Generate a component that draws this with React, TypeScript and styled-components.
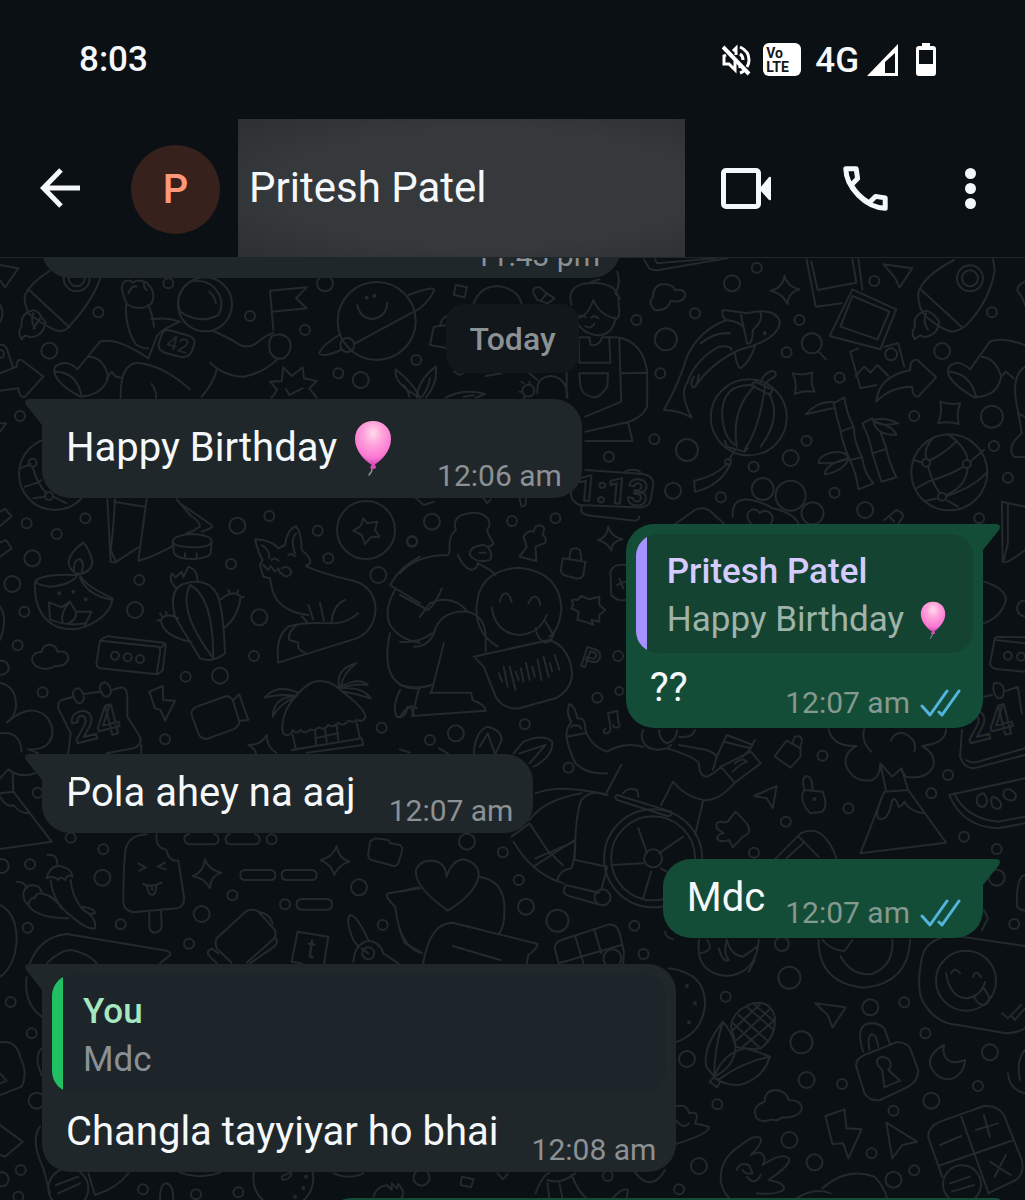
import React from "react";
import styled, { createGlobalStyle } from "styled-components";

const color = {
  page: "#0b1014",
  line: "#20272b",
  text: "#f5f8fa",
  incoming: "#20272a",
  outgoing: "#144d37",
  muted: "#8b9194",
};

const GlobalStyle = createGlobalStyle`
  * { box-sizing: border-box; }
  body { margin: 0; background: ${color.page}; }
`;

const Screen = styled.main`
  display: flex;
  flex-direction: column;
  height: 100vh;
  overflow: hidden;
  background: ${color.page};
  color: ${color.text};
  font-family: Roboto, "Noto Sans", sans-serif;
`;

const StatusBar = styled.div`
  display: flex;
  align-items: center;
  justify-content: space-between;
  flex: none;
  height: 119px;
  padding: 0 89px 0 79px;
  font-size: 35px;
  font-weight: 500;
  line-height: 40px;
`;

const StatusIcons = styled.div`
  display: flex;
  align-items: center;
  gap: 8px;
`;

const Network = styled.span`
  padding: 2px 0 0 6px;
`;

const VolteBadge = styled.span`
  display: flex;
  flex-direction: column;
  justify-content: center;
  width: 38px;
  height: 33px;
  margin-left: 4px;
  padding-left: 3px;
  border-radius: 6px;
  background: #ffffff;
  color: #15191c;
  font-size: 14px;
  font-weight: 700;
  line-height: 14px;
`;

const Battery = styled.span`
  display: flex;
  padding-left: 10px;
`;

const Header = styled.header`
  display: flex;
  align-items: center;
  flex: none;
  height: 139px;
  padding: 0 49px 0 40px;
  border-bottom: 1px solid ${color.line};
`;

const IconButton = styled.button`
  display: flex;
  align-items: center;
  justify-content: center;
  padding: 0;
  border: 0;
  background: none;
  color: ${color.text};
  cursor: pointer;
`;

const MenuButton = styled(IconButton)`
  padding-left: 5px;
`;

const Avatar = styled.span`
  display: flex;
  align-items: center;
  justify-content: center;
  width: 89px;
  height: 89px;
  margin: 2px 18px 0 51px;
  border-radius: 50%;
  background: #36211d;
  color: #ff9778;
  font-size: 40px;
  font-weight: 500;
`;

const ContactName = styled.h1`
  display: flex;
  flex: 1;
  align-items: center;
  align-self: stretch;
  margin: 0 36px 0 0;
  padding: 0 0 1px 11px;
  background: radial-gradient(ellipse at 55% 50%, #35393b 60%, #2c3033 100%);
  font-size: 42px;
  font-weight: 400;
`;

const Actions = styled.div`
  display: flex;
  align-items: center;
  gap: 72px;
`;

const Chat = styled.section`
  position: relative;
  flex: 1;
  min-height: 0;
  overflow: hidden;
`;

const Wallpaper = styled.svg`
  position: absolute;
  inset: 0;
  width: 100%;
  height: 100%;
  fill: none;
  stroke: #23292d;
  stroke-width: 2;
  stroke-linecap: round;
  stroke-linejoin: round;
  font-family: Roboto, sans-serif;
  font-weight: 700;
`;

const Messages = styled.ol`
  position: relative;
  display: flex;
  flex-direction: column;
  align-items: flex-start;
  gap: 26px;
  margin: 0;
  padding: 0 42px;
  list-style: none;
`;

const DateChip = styled.li`
  align-self: center;
  padding: 15px 23px 14px;
  border-radius: 18px;
  background: #11171b;
  color: ${color.muted};
  font-size: 32px;
  font-weight: 500;
  line-height: 40px;
`;

const Bubble = styled.li<{ $own?: boolean; $tail?: boolean }>`
  position: relative;
  display: flex;
  flex-direction: column;
  align-self: ${(p) => (p.$own ? "flex-end" : "flex-start")};
  border-radius: 28px;
  background: ${(p) => (p.$own ? color.outgoing : color.incoming)};

  &::before {
    content: "";
    display: ${(p) => (p.$tail === false ? "none" : "block")};
    position: absolute;
    top: 0;
    ${(p) => (p.$own ? "right: -17px; transform: scaleX(-1);" : "left: -17px;")}
    width: 46px;
    height: 28px;
    background: inherit;
    clip-path: path("M4 0 H46 V28 H17 V26 L1 6 Q-2 0 4 0 Z");
  }
`;

const EarlierBubble = styled(Bubble)`
  align-items: flex-end;
  justify-content: flex-end;
  width: 578px;
  height: 60px;
  margin-top: -40px;
  padding: 0 20px 6px;
`;

const NextBubble = styled(Bubble)`
  width: 70%;
  height: 79px;
`;

const Body = styled.div<{ $own?: boolean; $top?: number }>`
  display: flex;
  align-items: flex-end;
  justify-content: space-between;
  gap: ${(p) => (p.$own ? 20 : 33)}px;
  padding: ${(p) => p.$top ?? 13}px ${(p) => (p.$own ? 22 : 20)}px ${(p) => (p.$own ? 9 : 6)}px 24px;
`;

const Words = styled.p<{ $own?: boolean; $tall?: boolean }>`
  display: flex;
  align-items: center;
  gap: 17px;
  margin: 0;
  padding-right: ${(p) => (p.$tall ? 12 : 0)}px;
  padding-bottom: ${(p) => (p.$own ? 5 : 8)}px;
  font-size: 40px;
  line-height: ${(p) => (p.$tall ? 72 : 52)}px;
  white-space: nowrap;
`;

const Stamp = styled.span<{ $own?: boolean }>`
  display: flex;
  align-items: center;
  gap: 10px;
  color: ${(p) => (p.$own ? "#84998f" : color.muted)};
  font-size: 30px;
  line-height: 32px;
  white-space: nowrap;
`;

const Quote = styled.blockquote<{ $own?: boolean }>`
  display: flex;
  flex-direction: column;
  position: relative;
  margin: 10px 10px 0;
  padding: 14px 27px 9px 31px;
  overflow: hidden;
  border-radius: 22px;
  background: ${(p) => (p.$own ? "#154332" : "#1d242a")};
  font-size: 35px;
  line-height: 48px;

  &::before {
    content: "";
    position: absolute;
    inset: 0 auto 0 0;
    width: 11px;
    background: ${(p) => (p.$own ? "#a791ff" : "#21c063")};
  }
`;

const QuoteAuthor = styled.cite<{ $own?: boolean }>`
  color: ${(p) => (p.$own ? "#d6cbff" : "#a5e8c0")};
  font-style: normal;
  font-weight: 500;
`;

const QuoteText = styled.span<{ $own?: boolean }>`
  display: flex;
  align-items: center;
  gap: 16px;
  color: ${(p) => (p.$own ? "#9fb3a9" : "#8a9096")};
  white-space: nowrap;
`;

type Doodles = { x: number; y: number; sx: number; d: string; rings: number[][] };

const THIRD = 1 / 3;
const WIDE = 625 / 1568;

/* Wallpaper line art, one patch per region; each patch has its own drawing grid. */
const doodles: Doodles[] = [
  {
    x: 0, y: 250, sx: THIRD,
    d: `M150 62Q90 100 75 135Q70 150 85 190Q130 225 165 240Q190 248 205 232Q280 150 300 85M85 118L208 232
    M95 182Q60 190 65 230Q50 245 65 268Q75 250 90 262Q130 260 137 215Q125 205 118 190Q105 178 95 182M100 190Q90 215 105 235M120 205L100 235
    M0 45L55 55L15 112L0 90M0 165Q15 190 0 215M0 285Q15 280 22 300L38 350M0 370L50 350Q50 325 65 330L130 380L75 440Q58 445 55 415L0 422
    M232 358L300 275Q350 260 445 325M232 358Q200 325 165 350Q150 390 240 440Q310 435 325 380Q310 320 265 320M165 365Q230 365 245 438
    M375 150Q360 110 370 98Q385 85 400 98Q410 85 440 98Q470 125 455 160Q430 180 400 172Q380 165 375 150M385 130Q395 105 410 110M432 95Q430 115 440 120M378 165Q375 230 405 280Q420 295 445 295M445 165Q460 200 462 230M455 208Q500 200 540 215Q480 240 470 260L445 325
    M540 185Q600 225 655 195Q680 150 640 110Q610 85 570 95Q520 130 540 185M628 125Q645 140 648 160
    M505 240L560 255Q588 262 582 285L575 305Q565 325 540 320L495 308Q470 300 477 278L485 255Q492 238 505 240
    M640 243Q700 270 720 285Q750 298 775 275Q800 255 820 248M815 258Q850 245 868 270Q880 300 855 322Q830 335 812 310Q802 280 815 258M820 240L810 122L920 112L888 145L920 175L815 185M630 338Q670 378 730 380Q790 370 835 325M650 360Q640 400 605 440M362 443Q360 345 410 338Q490 345 570 418M455 402Q470 425 468 443M320 385L335 365L345 378L362 383
    M1072 165Q1080 205 1118 207Q1160 200 1162 158M1225 135Q1305 105 1302 122Q1290 150 1260 175L1065 280M1018 255Q960 290 958 312Q975 322 1022 300
    M810 395L845 393L850 352L875 378L908 352L912 385L950 393L928 415L950 443M815 443L832 420L810 395M858 418L868 435L908 415
    M1255 440Q1180 400 1187 358Q1240 400 1260 443M1210 405Q1225 420 1228 440M0 520L18 520L0 545M98 650Q110 700 140 730M60 655L92 642M75 710Q110 700 125 690M100 745L135 740M160 740L200 760`,
    rings: [[230,85,13],[230,85,8],[0,312,4],[148,302,8],[295,187,5],[615,163,27],[505,100,5],[750,198,5],[915,240,5],[975,100,8],[1130,213,39],[1100,143,1],[1123,137,1],[1042,285,7],[1015,370,5],[1082,390,8],[60,498,5],[165,672,36],[98,638,4],[147,738,4]],
  },
  {
    x: 400, y: 250, sx: WIDE,
    d: `M612 28L625 55Q640 65 660 58L820 25M640 28L645 40L790 25M140 105L168 112L162 142L135 135ZM335 130Q330 110 350 112L368 130L388 145L370 160L345 150ZM368 130L355 150M185 160Q200 110 245 108Q295 115 305 160M120 225L85 230L75 285L120 295M100 228Q105 200 120 198
    M90 350Q95 400 65 443M90 350Q45 390 42 443M75 385Q70 420 55 440M115 443Q160 415 213 432Q200 440 190 443M160 440L185 436M345 430Q340 380 380 378Q420 385 420 443M325 370L345 390M135 365L150 375L160 368M310 400L305 395M300 425L306 425M310 445L314 438M325 395L325 402M215 378L255 370
    M430 165Q415 100 485 98Q555 100 548 165Q555 200 540 210Q530 260 490 255Q460 250 445 220M485 150Q470 200 445 205M485 150Q500 195 540 205M480 95L500 88M545 65Q555 100 540 130L552 145M448 200Q458 192 466 202M480 202Q490 195 498 205M465 228Q480 240 488 220
    M450 262L475 262L478 285Q500 290 507 262L545 262Q610 275 620 365L620 470Q610 500 575 515L465 545M525 262L528 338L450 338L448 262M550 265L555 455L465 500M555 370L620 368M450 370L522 370L520 410Q500 445 485 442Q455 435 452 405ZM418 365L418 443M572 515L583 573L465 573
    M640 180Q620 160 635 140Q635 110 655 103Q685 100 690 120Q718 115 715 140Q705 160 680 152Q670 185 640 180M965 77Q970 110 1002 118Q975 125 972 162Q960 130 930 122Q960 115 965 77M985 370Q1010 378 1035 367Q1028 400 1040 425Q1010 420 990 432Q998 400 985 370M1355 455Q1380 465 1405 460Q1395 490 1402 522Q1375 512 1350 520Q1362 490 1355 455
    M810 180Q850 185 870 190Q940 170 953 215Q950 270 850 300Q780 340 740 410M810 180Q805 200 820 210Q750 240 720 320Q700 400 662 480Q700 480 732 503Q700 430 720 400Q740 330 800 290Q830 285 832 300M855 195Q870 270 870 280Q885 285 885 240Q910 215 905 190M820 210Q850 215 860 230M755 280Q790 245 828 250M840 310Q845 350 855 355Q880 330 890 290M738 380Q725 400 735 412Q745 412 750 375
    M1020 28L1043 170L1108 160M1032 35L1048 120L1145 98L1135 28M1150 28L1160 118M1135 118L1245 178L1205 298L1078 258ZM1135 138L1228 185L1198 268L1105 230ZM1215 290L1250 280L1265 350M1150 295L1130 305L1155 415L1195 405M1143 378L1165 350L1180 368L1198 345L1225 378M1195 455Q1200 380 1280 360Q1280 325 1298 330L1345 382L1300 440Q1285 440 1285 410Q1230 410 1195 455M1213 43L1285 55L1253 113L1243 85Z
    M1390 30Q1310 80 1300 130Q1300 180 1320 200Q1360 240 1385 245Q1410 240 1425 220Q1480 150 1492 60L1488 28M1308 120L1410 232M1320 182Q1285 195 1292 230Q1280 250 1292 268Q1305 250 1315 262Q1350 255 1353 215Q1340 190 1320 182M1320 190Q1310 215 1325 240
    M1430 358L1480 275Q1510 260 1568 285M1430 358Q1400 325 1378 350Q1360 385 1440 442Q1500 440 1508 380Q1495 325 1460 320M1378 365Q1430 370 1445 438M1508 380L1520 365L1540 385M1568 350Q1530 380 1550 480L1560 550Q1520 590 1540 620L1568 622M1550 490L1568 500M1568 95Q1545 105 1550 125Q1560 135 1568 165M1050 305L1068 327
    M885 405Q810 400 808 490Q810 560 840 585M890 408Q830 480 845 590M915 415Q900 540 865 598M925 430Q960 500 905 590M880 405L892 395L935 420L928 435ZM905 398Q910 370 935 362Q955 375 925 390L915 405M815 572L820 590L865 605L872 595M840 600L825 630M822 640Q790 680 738 692L740 725Q800 710 828 645
    M1088 460L1115 442Q1120 490 1138 530Q1140 580 1160 625Q1165 670 1188 700L1150 718Q1145 670 1128 628Q1110 580 1105 540Q1095 500 1088 460M1105 545L1138 530M1128 630L1160 622M1018 493Q1050 450 1090 457M1018 493L1085 475M1160 520L1185 505M1160 520Q1180 570 1185 610Q1195 650 1208 695L1245 682Q1225 630 1220 595Q1210 560 1205 545M1185 610L1220 597M1185 510Q1220 500 1250 520Q1210 530 1190 515Q1240 530 1245 555Q1195 555 1188 515M1125 625Q1120 600 1080 608Q1050 620 1050 638Q1090 645 1125 625Q1070 640 1065 673Q1110 665 1125 628
    M1340 560Q1310 600 1322 628M1325 650Q1335 700 1355 730M1375 553Q1420 590 1424 630M1424 655Q1420 710 1370 735M1330 630Q1360 615 1395 575M1288 630L1312 638M1325 695Q1390 670 1412 650M1295 715L1325 695M1372 738Q1440 710 1470 670M1430 635L1465 600M1350 745L1320 752M1370 750L1400 770
    M465 660L610 672Q640 680 635 710L628 755Q620 775 590 772L450 765Q425 750 430 725M565 665Q575 655 600 662L605 672M455 770L455 785Q460 795 480 797L590 812Q600 810 600 800
    M40 745L60 765L85 755M210 745L218 760L228 748M300 745L305 770L315 765L316 745M835 800Q830 750 870 748Q910 755 935 775Q990 790 1000 822M880 820Q860 790 885 778Q900 780 902 790Q915 775 930 790Q940 805 930 822M1215 810L1245 780Q1265 790 1262 800L1250 822M1228 800L1240 815M690 822L740 780Q755 770 775 780L812 820`,
    rings: [[895,53,5],[833,100,8],[740,190,5],[593,210,5],[667,268,11],[1002,210,5],[970,307,5],[1190,93,5],[1485,187,5],[1360,303,8],[653,370,5],[1103,383,5],[1290,498,5],[1485,500,11],[1490,588,5],[1525,683,5],[1020,572,5],[980,624,8],[887,650,5],[720,600,11],[638,568,5],[524,620,5],[685,722,8],[805,742,5],[1090,728,5],[1167,780,8],[1453,805,5],[80,815,8],[281,813,5],[390,805,5],[41,330,5],[322,422,6],[915,250,1],[1232,313,6],[1430,85,13],[1430,85,8],[1033,280,10],[875,502,38],[823,636,3],[1378,667,38],[1320,638,4],[1422,642,4],[1360,740,4],[910,717,11],[980,737,15],[1035,790,11]],
  },
  {
    x: 0, y: 490, sx: THIRD,
    d: `M0 65L15 57L35 78L0 108M0 158L18 150L35 175L0 200M1090 85L1102 100L1132 95L1125 120L1138 140L1112 142L1095 162L1085 135L1060 122L1082 108Z
    M250 158Q200 195 207 225Q215 250 240 252Q275 245 277 215Q270 180 250 158M222 240Q220 210 240 207Q255 220 245 245M232 255Q215 285 150 290Q105 285 108 270Q140 250 232 255M105 275Q100 380 175 412Q220 425 255 410Q330 380 338 325Q260 290 240 258M240 262Q260 315 338 330M150 388L147 337L185 352L210 335L228 365L275 365L255 405M150 388Q200 410 258 400M188 395Q180 370 210 335M228 365Q230 390 205 400
    M322 28L332 215L345 218L415 172M345 28Q340 120 332 180L348 215M342 35L433 50M440 28L415 212Q450 205 515 170M530 28L570 75Q600 95 600 110Q580 125 560 130M540 40L635 105Q640 115 605 125
    M518 155Q520 135 577 132Q635 135 635 155Q630 172 577 172Q520 170 518 155L522 190Q535 207 577 207Q625 205 632 190L635 155M555 190L555 200M590 190L590 200
    M530 295Q505 275 515 250L527 262L545 245L550 262L565 230Q595 240 592 275M600 505L525 380Q505 300 550 282Q620 260 650 310Q670 350 675 490Q640 520 600 505M570 285Q530 360 640 505M570 285Q640 320 640 505M660 330Q700 295 722 320Q715 380 675 412M572 455Q490 440 482 390Q500 365 535 385M690 310L685 300M712 308L715 300M722 322L732 320M485 378L480 370M500 375L498 365M478 390L472 392
    M765 148Q815 150 835 175L855 165Q860 120 888 108Q905 130 905 180Q935 205 930 220L918 228M765 148Q775 190 788 210L780 225L790 260L810 265Q815 300 825 320Q850 365 925 375M785 165Q810 180 808 205M885 190Q870 150 888 130M815 210Q825 200 835 212M865 195Q875 190 885 198M790 225L805 240L812 228L825 245L835 235L840 250M845 235Q860 225 872 240Q880 250 860 260Q845 255 845 248
    M920 230Q980 255 1060 272Q1125 290 1127 360Q1120 430 1060 448L835 518Q825 440 865 410Q900 395 1000 400Q1040 400 1075 370M995 395Q1000 345 1035 330M925 345L940 390M960 338L972 392M905 378L920 395M890 405Q860 430 868 450L895 458Q890 480 915 488
    M110 530Q85 510 105 490Q120 485 125 485Q130 460 155 465Q170 470 172 485Q205 480 205 505Q200 530 165 528Q140 545 110 530M300 452Q320 435 335 440L490 458Q500 462 496 475L488 540Q475 555 465 552L300 535Q287 530 290 515ZM300 452L475 470Q482 475 480 490L470 550M480 475L495 462
    M235 595Q250 600 252 625Q245 645 232 638Q215 620 220 605Q225 595 235 595M315 577Q330 582 333 605Q328 625 312 618Q297 600 300 588Q305 578 315 577M220 620L185 630Q172 638 175 655L212 730L205 790M252 612L300 605M335 600L365 592Q380 595 382 615L382 680L420 740Q428 765 400 775L320 790M424 765L424 790
    M448 605L488 588L490 630L525 632L495 692L482 660L465 655ZM590 650L680 618Q695 620 700 635L718 695Q715 712 700 718L620 747Q600 745 595 730L575 675Q572 658 590 650M700 630L718 613L745 690L722 692
    M890 615Q930 570 960 573Q1000 575 1020 600M890 615Q850 660 848 700Q843 735 860 735Q875 735 878 720Q890 735 903 720Q915 735 930 718Q945 725 955 712Q975 722 985 705Q1000 715 1015 698Q1030 712 1045 692Q1065 700 1070 690Q1090 698 1097 680Q1090 650 1020 600M1020 600Q1000 540 1068 520Q1030 550 1022 590Q1080 560 1103 585Q1060 580 1025 595Q1090 590 1112 625Q1070 610 1030 605M895 608Q830 580 795 622Q850 610 890 618Q820 620 818 680Q840 640 888 620M878 735L888 780M1070 700L1080 745M875 780L1085 745L1090 765L920 788M945 720L948 765M975 715L980 755M1010 705L1015 750M945 745L1015 730
    M745 765Q785 765 800 735Q800 770 828 788M745 765Q765 775 768 790M0 578Q50 590 48 650Q45 680 20 698Q90 635 140 680Q175 730 140 765Q120 780 85 778L115 790M0 730Q60 720 65 785M0 865L25 838Q60 865 105 850M38 850L40 895M0 350Q25 385 0 450
    M1260 200Q1200 230 1170 285L1260 340M1185 300Q1150 360 1170 405Q1200 450 1260 458M1170 430Q1150 520 1180 565Q1210 600 1260 595M1200 600Q1175 650 1190 680Q1215 685 1220 660Q1230 640 1250 655`,
    rings: [[80,100,5],[170,132,5],[256,85,5],[97,205,8],[37,282,8],[73,365,5],[53,466,5],[418,270,5],[405,360,8],[5,533,7],[128,607,5],[557,560,5],[660,557,8],[495,748,5],[712,107,8],[693,222,5],[808,78,5],[953,122,5],[985,205,5],[1135,255,8],[778,382,8],[762,498,5],[1237,153,5],[1145,713,5],[1098,120,29],[178,310,1],[220,305,1],[257,328,1],[345,497,4],[383,502,4],[420,507,4]],
  },
  {
    x: 400, y: 500, sx: WIDE,
    d: `M125 155Q120 110 140 90Q130 50 165 42Q200 30 220 55Q230 75 218 90Q225 115 235 130Q230 140 220 140Q235 165 225 180Q190 190 175 165Q175 145 190 140Q210 130 218 140M145 165Q160 205 180 210Q195 205 195 190M125 155L120 165Q40 165 0 220M195 190Q230 210 240 225M200 158L215 158
    M0 285L70 330Q90 310 105 265M50 350L75 310Q130 280 170 335Q100 330 85 400Q70 440 35 440M0 425Q50 430 80 400M170 335Q220 350 215 430L215 455M110 430L78 580M0 555Q40 570 80 555M75 578L178 578L182 600Q215 615 215 632L30 648L48 565M0 650L20 620Q30 620 35 645
    M245 440Q190 400 192 325Q195 210 298 203Q400 215 405 325Q400 390 375 410M250 305Q255 280 265 280Q275 282 280 305M322 310Q330 288 340 290Q350 295 352 315M230 322Q240 400 300 405Q350 400 368 345M340 385Q345 420 365 428Q380 425 385 405L365 365
    M185 470L375 420Q425 440 432 520Q430 570 390 595L300 625Q260 630 240 590L210 500ZM248 520L256 545M260 500L270 560M275 500L290 570M290 515L298 540M303 505L310 545M316 490L325 540M332 500L338 530M345 480L355 540M360 470L373 530M376 490L382 515M388 465L400 510
    M300 170L318 140L310 110Q320 90 335 95L340 80Q355 70 362 85L358 105Q372 115 362 130L340 140L342 183ZM522 80Q530 110 558 118Q530 125 530 152Q522 128 497 120Q520 112 522 80M408 175L465 185L460 225Q455 238 440 235L410 225Q400 215 405 200ZM425 175L428 150Q440 140 452 150L455 180
    M435 310Q425 295 445 300L455 288L475 298L500 290L500 315L515 330L500 345L500 365L480 360L485 375L465 365L445 360L448 335L430 325ZM565 195Q535 190 528 215L530 285Q545 305 565 300M550 235L560 265M545 255L565 245
    M1510 5L1512 185Q1520 195 1568 150M1510 5L1568 20M1525 10L1525 130L1515 180M1465 245Q1520 265 1520 300Q1510 350 1465 370M1568 412L1500 410Q1490 412 1490 430L1480 490Q1482 505 1500 508L1568 515M1495 420L1568 430
    M1465 590L1485 585M1490 550Q1515 545 1515 575Q1515 595 1500 595Q1485 580 1490 550M1515 575L1550 560L1560 640M1410 690L1405 770Q1415 805 1440 805L1568 765M1420 780Q1430 790 1450 785L1568 745
    M1378 885L1568 835M1378 885Q1410 980 1500 985L1568 970M1390 880Q1420 955 1500 965L1568 950M1450 915Q1440 885 1465 880Q1480 905 1465 920Q1455 922 1450 915M1485 915Q1480 890 1490 890Q1515 905 1505 925Q1490 930 1485 915M1515 890Q1510 865 1530 868Q1555 885 1540 900Q1525 905 1515 890
    M1075 688Q1085 740 1145 738Q1110 760 1120 800Q1140 850 1185 840Q1205 830 1205 790L1220 875M1165 688Q1155 720 1182 755M1232 722Q1240 695 1265 700Q1300 720 1290 755M1370 688Q1370 730 1310 738Q1345 760 1338 800Q1320 840 1270 830Q1260 820 1258 805L1275 870M1205 790L1235 830L1258 805M1215 875L1275 870L1370 1028L1155 1060ZM1215 875Q1190 940 1200 955Q1220 965 1230 925L1235 900Q1245 890 1250 920Q1260 920 1265 905Q1280 935 1315 940
    M515 685Q505 700 520 700Q530 695 528 680L522 640L545 632L548 670Q555 675 548 682Q535 685 535 675
    M425 612Q415 640 430 665Q415 690 418 710Q420 740 440 790Q470 825 520 820M425 612Q440 620 445 655Q465 650 465 690Q480 740 520 755Q560 725 610 740M418 710L465 700M430 680Q445 670 455 685M610 690Q600 720 620 740Q640 755 670 745L680 735M650 690Q650 720 670 730Q695 720 695 690M740 690Q735 715 700 710M670 745Q740 770 750 790Q750 830 770 830Q790 820 805 800M700 735L770 750Q790 760 795 770L785 810M820 705L885 735M820 705L812 725L880 745L890 720M812 725L795 770M880 745L860 770M805 800L880 755L905 790L840 848L805 800M840 790Q860 770 870 785Q850 795 835 815M555 795L515 885M840 848Q800 905 760 900Q715 890 685 845L655 915M760 905L740 1005
    M545 885L680 935Q685 950 670 948L545 900Q535 890 545 885M560 880Q570 860 595 870L598 890M340 880Q400 850 520 885Q480 865 455 900Q440 940 438 1078M325 960Q360 900 455 880M280 1010L325 970L375 1060M340 1075L438 1025M620 1060L598 985M650 1060L710 1010
    M842 935L870 970Q885 1000 860 1010L835 1042L825 1020Q805 1030 795 1015Q800 1000 812 1000L795 985Q790 965 805 965Q825 970 825 960ZM888 888L945 858L935 925L920 895ZM1015 870L1060 875Q1075 915 1060 935L1030 940Q1005 910 1010 880ZM1015 870Q1005 835 1020 828Q1035 830 1035 870M945 760L970 722L1005 745L1005 770L980 803L940 770ZM985 730L990 710Q1010 705 1008 725L1003 745
    M940 1078L1005 1000Q1030 985 1055 1000Q1085 1030 1095 1078M970 1075L1015 1025M1000 1010L1050 1070M185 760Q190 690 220 680Q255 690 255 720L240 760M200 740L220 700L238 760M285 760L310 725Q360 700 382 725Q385 770 335 800M300 760L365 735L325 790M0 748L25 758M98 745L120 760`,
    rings: [[30,125,5],[547,468,5],[495,593,5],[550,573,4],[313,673,5],[140,700,8],[75,720,5],[423,803,5],[1060,767,5],[1125,925,5],[1375,825,5],[1333,880,5],[968,965,5],[888,1058,5],[1415,1010,5],[1497,1047,5],[168,1025,8],[258,1057,5],[1568,325,8],[1525,467,4],[1558,470,4],[635,1075,49],[635,1075,42],[635,1075,9],[1040,897,1]],
  },
  {
    x: 0, y: 780, sx: THIRD,
    d: `M0 40L40 35L155 185L0 207M0 50Q20 85 40 75Q60 100 85 100M38 0L40 35
    M140 295Q150 255 180 258Q215 265 218 290Q200 280 195 300Q180 285 175 300Q160 285 140 295M143 225Q175 220 172 258M152 300Q160 370 210 405Q260 450 285 445Q290 410 250 390Q215 350 212 300M70 340Q75 315 100 315Q125 320 125 340Q105 340 105 355Q90 350 85 375Q70 365 70 340M50 305Q75 305 80 325M85 375Q110 415 205 415M125 340Q165 350 185 385M248 380Q285 385 285 400L265 402
    M375 220Q380 165 440 163M470 163Q465 190 485 205Q500 205 502 220Q510 245 535 242L552 350Q555 380 530 385L400 397Q370 390 370 365Q370 280 375 220M448 397L448 440Q450 458 465 458Q485 455 485 435L483 393M415 250L437 263L418 272M495 248L473 260L497 268M430 312Q455 325 485 308M440 318Q445 345 457 345Q470 340 468 315M455 320L457 330
    M615 238Q625 268 663 278Q630 290 630 325Q615 295 578 288Q612 275 615 238M1010 198Q1015 235 1048 245Q1015 255 1003 285Q995 255 962 240Q1000 230 1010 198
    M567 163Q552 165 553 178Q555 193 570 193L640 193Q655 192 656 178Q655 165 642 163M690 163Q676 165 677 178Q678 193 692 193L764 193Q778 192 779 178Q778 165 765 163
    M735 270L812 270Q826 272 826 285Q826 300 812 300L735 300Q721 300 721 285Q721 270 735 270ZM860 270L936 270Q950 272 950 285Q950 300 936 300L860 300Q845 300 845 285Q845 270 860 270ZM905 357L982 357Q996 359 996 373Q996 388 982 389L905 389Q890 388 890 373Q890 357 905 357Z
    M1110 185L1125 175L1165 180L1172 190L1200 195Q1208 200 1207 210L1195 250Q1190 260 1178 257L1115 240Q1103 235 1105 222ZM650 475L740 392Q760 385 775 395L825 450Q830 465 820 478L740 548M775 395Q810 400 818 430M825 470Q840 490 815 505L750 550M650 475Q640 500 660 515L695 548M655 520L635 505Q615 515 630 530L650 550M893 455L985 470L972 552M893 455L875 545L905 550
    M1105 480Q1070 405 1050 405Q1035 420 1060 480L1075 500M1060 545Q1065 490 1105 482Q1140 485 1150 520L1195 550M1085 505L1105 520M90 550Q120 470 200 462L500 512Q520 520 505 530L480 550M140 550Q180 510 215 510Q265 520 290 550M0 375Q50 400 50 480Q45 560 0 590M80 590Q70 670 125 710M0 787Q50 780 60 830Q85 880 65 920L0 945M0 880L20 902L0 910M125 805Q100 830 125 885
    M0 1035L68 1085L15 1130L0 1125M120 1040Q90 1080 130 1165L150 1240M168 1215L235 1190M175 1240L240 1210M265 1180L285 1245Q350 1225 385 1180M480 1258Q480 1210 500 1210Q520 1215 520 1258M845 1190Q870 1175 875 1180Q870 1200 848 1200ZM1120 1250Q1130 1220 1160 1215L1175 1230L1175 1210L1190 1225L1195 1212L1205 1225Q1215 1240 1205 1252M540 1178Q600 1200 660 1178M1000 1180Q1050 1200 1090 1180
    M1260 325L1165 340Q1150 345 1185 380Q1195 450 1215 490L1260 515`,
    rings: [[212,173,5],[310,208,5],[90,253,5],[5,258,7],[307,293,8],[83,443,5],[362,433,5],[697,346,5],[605,402,8],[567,491,5],[1077,322,8],[1148,435,5],[815,178,5],[855,373,5],[32,666,5],[95,760,5],[110,962,8],[113,38,5],[62,1170,5],[5,1198,7],[429,1228,5],[588,1243,5],[715,1237,5],[55,1250,5],[1105,520,6],[205,1225,20],[850,1195,30],[918,1190,1],[910,1225,1],[885,1250,1]],
  },
  {
    x: 400, y: 840, sx: WIDE,
    d: `M120 212Q35 140 40 90Q50 60 80 62Q115 65 117 110Q130 60 160 58Q200 70 197 110Q190 160 120 212M0 155L45 142M197 110Q265 120 262 215Q262 260 248 282M0 270Q20 330 55 340M58 370Q75 250 130 248Q140 250 345 312Q345 325 322 345L318 370M132 318L252 360
    M398 370L388 325Q390 305 405 300L525 253Q545 255 550 275L562 335L560 370M440 290L460 370M487 268L505 340M398 370L556 315M285 5Q330 100 410 130M335 80L438 0M378 40L408 75M430 85Q440 55 440 0M430 85Q400 90 395 120M440 60L520 80L505 150M415 135L410 155Q415 165 430 170L495 192M415 135L500 158M610 70L535 75M630 95L610 175M655 85L720 130M685 298Q665 290 665 275
    M750 300Q740 400 820 408Q895 400 900 300M770 300Q790 330 755 340M820 300Q830 345 860 350Q885 330 895 320M800 325Q810 370 825 360Q810 340 820 300M875 395L890 360M1050 300Q1050 430 1165 443Q1275 430 1280 300M1105 348Q1130 405 1180 403Q1240 380 1235 300M1060 300Q1080 330 1115 333L1135 300
    M675 385Q770 400 765 500Q755 580 695 605M1568 318L1380 285Q1320 300 1310 350Q1295 440 1310 480Q1340 550 1400 555L1520 580Q1550 578 1568 565M1383 400Q1390 378 1405 400M1437 410Q1445 385 1458 412M1370 400Q1380 475 1425 475Q1460 465 1468 425M1440 470Q1450 495 1465 495Q1480 490 1478 470L1465 445M1510 520L1525 535L1558 495M1535 530L1542 540L1568 505M1568 105Q1545 110 1548 200Q1555 210 1568 212M1465 210L1475 235L1460 270M1042 490L1118 502L1085 563L1073 525Z
    M830 560Q835 510 885 490Q930 480 940 530Q945 590 905 625M830 560Q840 590 842 620Q870 630 905 625M835 550L900 620M850 525L920 600M870 500L938 570M885 490L940 545M860 620L940 540M845 600L930 505M835 570L905 490M810 545Q760 620 768 680L788 710Q840 680 842 620Q835 580 810 545M810 545Q790 620 788 705M788 712Q810 640 865 625Q900 635 928 650Q910 720 850 735Q820 735 800 722ZM928 650Q860 665 800 718M788 712L777 725L795 742L803 725
    M1145 680Q1140 660 1165 645L1245 607Q1270 605 1280 625L1300 690Q1300 725 1275 740L1205 780Q1180 785 1165 760ZM1162 635Q1145 575 1165 555Q1190 540 1215 565L1230 615M1178 630Q1172 590 1182 583Q1195 580 1200 620M1210 690Q1190 670 1200 655Q1215 645 1228 660Q1235 680 1225 690L1255 722L1215 742ZM1365 615Q1325 640 1330 675Q1345 720 1380 718Q1415 705 1418 660Q1385 675 1370 655Q1360 640 1365 615
    M895 835Q880 800 915 785Q915 750 945 750Q970 755 975 780Q1010 780 1008 810Q995 835 960 832Q945 845 930 838Q910 850 895 835M1067 828L1115 808L1120 865L1158 868L1125 955L1112 910L1085 912ZM1220 848L1297 905L1260 915L1235 955Z
    M805 1025Q800 960 850 920Q890 880 905 895Q910 910 880 945Q910 925 915 960L910 975Q960 935 975 955Q985 970 925 1020Q970 1030 962 1050Q940 1065 895 1060M805 1025Q810 1060 830 1078M845 990Q850 965 875 975L885 1000Q865 1005 860 990M870 1010Q890 1040 905 1005M1525 700Q1530 750 1568 760M1568 630Q1545 660 1555 720
    M1325 890Q1325 860 1355 845L1465 798Q1500 795 1515 825L1560 960Q1568 1000 1545 1020L1475 1060M1325 890L1360 1010M1408 830L1475 1055M1350 978L1540 900M1355 915L1408 888M1445 870L1500 850M1465 825L1480 890M1480 965L1532 1005M1520 945L1492 1010M1380 1030L1430 1010M1385 1055L1440 1035
    M1060 1045Q1120 980 1190 1010Q1215 1040 1222 1075M990 1078Q1040 1040 1080 1060M692 800Q720 790 725 820Q755 810 740 850L775 860Q780 880 692 912M692 840Q710 870 725 850M155 1010L185 1018L178 1042L152 1035ZM245 1000L258 1018L270 1002M340 1060Q360 1000 375 1000M370 1030L375 1078M400 1030L408 1078M430 1005Q450 1060 470 1078M370 1020Q400 1035 440 1000M530 1078Q560 1040 572 1050L568 1078M590 998Q630 1060 665 990`,
    rings: [[298,120,5],[316,200,8],[395,242,11],[588,257,5],[611,342,5],[958,312,7],[977,413,11],[817,470,5],[1497,113,8],[1541,252,5],[1180,502,8],[1265,487,5],[1007,607,11],[1318,580,5],[1480,637,8],[720,657,8],[1020,720,8],[1109,732,5],[1450,738,5],[796,793,5],[1333,782,8],[1238,812,5],[977,900,8],[1183,940,5],[750,978,8],[1040,967,8],[1290,991,5],[1238,1019,8],[700,1048,5],[54,1013,8],[521,1008,5],[508,172,8],[533,355,9],[720,438,1],[740,490,1],[725,547,1],[1420,422,30],[1410,1033,19]],
  },
];

const lettering = [
  { t: "42", x: 176, y: 351, s: 20, r: 15, solid: true },
  { t: "1:13", x: 611, y: 503, s: 36, r: 5 },
  { t: "24", x: 99, y: 738, s: 42, r: -14 },
  { t: "24", x: 992, y: 738, s: 42, r: -14 },
  { t: "P", x: 588, y: 668, s: 28, r: 18 },
  { t: "t", x: 310, y: 958, s: 28, r: 8, solid: true },
];

const ChatWallpaper = () => (
  <Wallpaper viewBox="0 258 1025 942" preserveAspectRatio="xMidYMin slice" aria-hidden="true">
    {doodles.map((p, i) => (
      <g key={i}>
        <path d={p.d} transform={`translate(${p.x} ${p.y}) scale(${p.sx} ${THIRD})`} vectorEffect="non-scaling-stroke" />
        {p.rings.map(([cx, cy, r], j) => (
          <circle key={j} cx={p.x + cx * p.sx} cy={p.y + cy * THIRD} r={r} />
        ))}
      </g>
    ))}
    {lettering.map((l, i) => (
      <text
        key={i}
        x={l.x}
        y={l.y}
        fontSize={l.s}
        fontWeight={l.solid ? 400 : 700}
        fill={l.solid ? "#23292d" : "none"}
        stroke={l.solid ? "none" : "#23292d"}
        textAnchor="middle"
        transform={`rotate(${l.r} ${l.x} ${l.y})`}
      >
        {l.t}
      </text>
    ))}
  </Wallpaper>
);

const Balloon = ({ id, height }: { id: string; height: number }) => (
  <svg width={Math.round(height * 0.68)} height={height} viewBox="0 0 38 56" role="img" aria-label="balloon">
    <defs>
      <radialGradient id={id} cx="0.5" cy="0.28" r="0.75">
        <stop offset="0" stopColor="#ffdcea" />
        <stop offset="0.35" stopColor="#ffa3db" />
        <stop offset="0.75" stopColor="#fb78d2" />
        <stop offset="1" stopColor="#c83fb0" />
      </radialGradient>
    </defs>
    <path d="M18 47Q19 51 15 55" fill="none" stroke="#8d9094" strokeWidth="1.5" strokeLinecap="round" />
    <path d="M19 1C29 1 37 8 37 19C37 31 27 41 20 45H18C11 41 1 31 1 19C1 8 9 1 19 1Z" fill={`url(#${id})`} />
    <path d="M18 44H21L22 48Q19 50 16 48Z" fill="#d94fb4" />
  </svg>
);

const ReadMark = () => (
  <svg width="41" height="28" viewBox="0 0 41 28" fill="none" stroke="#53b5dd" strokeWidth="3" strokeLinecap="round" strokeLinejoin="round" role="img" aria-label="Read">
    <path d="M2 17L10 26L27 2M19 23L22 26L39 2" />
  </svg>
);

const StatusArea = () => (
  <StatusBar>
    <span>8:03</span>
    <StatusIcons>
      <svg width="29" height="32" viewBox="0 0 29 32" fill="none" stroke="#fff" strokeWidth="3" aria-label="Muted" role="img">
        <path d="M4 11L2 12V20H7L13 26V17M11 7L14 4V11M18 3Q27 7 27 16Q27 20 25 23M18 10Q21 12 21 16M18 29Q21 28 23 26M18 22V24" />
        <path d="M1 3L27 30" strokeWidth="4" />
      </svg>
      <VolteBadge>
        <span>Vo</span>
        <span>LTE</span>
      </VolteBadge>
      <Network>4G</Network>
      <svg width="31" height="32" viewBox="0 0 31 32" aria-label="Signal" role="img">
        <path d="M31 0V32H0ZM28 9L18 18V29H28Z" fill="#fff" fillRule="evenodd" />
      </svg>
      <Battery>
        <svg width="20" height="33" viewBox="0 0 20 33" aria-label="Battery" role="img">
          <path d="M6 0H14V3H17Q20 3 20 6V30Q20 33 17 33H3Q0 33 0 30V6Q0 3 3 3H6ZM3 7V21H17V7Z" fill="#fff" fillRule="evenodd" />
        </svg>
      </Battery>
    </StatusIcons>
  </StatusBar>
);

const ChatHeader = () => (
  <Header>
    <IconButton aria-label="Back">
      <svg width="40" height="40" viewBox="0 0 40 40" fill="none" stroke="currentColor" strokeWidth="5">
        <path d="M21 2L3.500 20L21 38M3 20H40" />
      </svg>
    </IconButton>
    <Avatar>P</Avatar>
    <ContactName>Pritesh Patel</ContactName>
    <Actions>
      <IconButton aria-label="Video call">
        <svg width="50" height="41" viewBox="0 0 50 41">
          <rect x="2.500" y="2.500" width="35" height="36" rx="2.500" fill="none" stroke="currentColor" strokeWidth="5" />
          <path d="M39 20L48 9Q50 8 50 10V31Q50 33 48 32L39 22Z" fill="currentColor" />
        </svg>
      </IconButton>
      <IconButton aria-label="Voice call">
        <svg width="45" height="45" viewBox="0 0 45 45" fill="none" stroke="currentColor" strokeWidth="5" strokeLinejoin="round">
          <path d="M2.800 2.800H13.200L14.600 12.500L8.200 18.900Q14.500 30 26.100 36.800L32.500 30.400L42.200 31.900V42.200Q28 42 15.500 29.500Q3 17 2.800 2.800Z" />
        </svg>
      </IconButton>
      <MenuButton aria-label="More options">
        <svg width="11" height="41" viewBox="0 0 11 41" fill="currentColor">
          <circle cx="5.500" cy="5.500" r="5.500" />
          <circle cx="5.500" cy="20.500" r="5.500" />
          <circle cx="5.500" cy="35.500" r="5.500" />
        </svg>
      </MenuButton>
    </Actions>
  </Header>
);

export default function App() {
  return (
    <>
      <GlobalStyle />
      <Screen>
        <StatusArea />
        <ChatHeader />
        <Chat>
          <ChatWallpaper />
          <Messages>
            <EarlierBubble $tail={false}>
              <Stamp>11:43 pm</Stamp>
            </EarlierBubble>
            <DateChip>Today</DateChip>
            <Bubble>
              <Body>
                <Words $tall>
                  Happy Birthday <Balloon id="balloon-large" height={56} />
                </Words>
                <Stamp>12:06 am</Stamp>
              </Body>
            </Bubble>
            <Bubble $own>
              <Quote $own>
                <QuoteAuthor $own>Pritesh Patel</QuoteAuthor>
                <QuoteText $own>
                  Happy Birthday <Balloon id="balloon-small" height={38} />
                </QuoteText>
              </Quote>
              <Body $own $top={9}>
                <Words $own>??</Words>
                <Stamp $own>
                  12:07 am <ReadMark />
                </Stamp>
              </Body>
            </Bubble>
            <Bubble>
              <Body>
                <Words>Pola ahey na aaj</Words>
                <Stamp>12:07 am</Stamp>
              </Body>
            </Bubble>
            <Bubble $own>
              <Body $own>
                <Words $own>Mdc</Words>
                <Stamp $own>
                  12:07 am <ReadMark />
                </Stamp>
              </Body>
            </Bubble>
            <Bubble>
              <Quote>
                <QuoteAuthor>You</QuoteAuthor>
                <QuoteText>Mdc</QuoteText>
              </Quote>
              <Body>
                <Words>Changla tayyiyar ho bhai</Words>
                <Stamp>12:08 am</Stamp>
              </Body>
            </Bubble>
            <NextBubble $own />
          </Messages>
        </Chat>
      </Screen>
    </>
  );
}
